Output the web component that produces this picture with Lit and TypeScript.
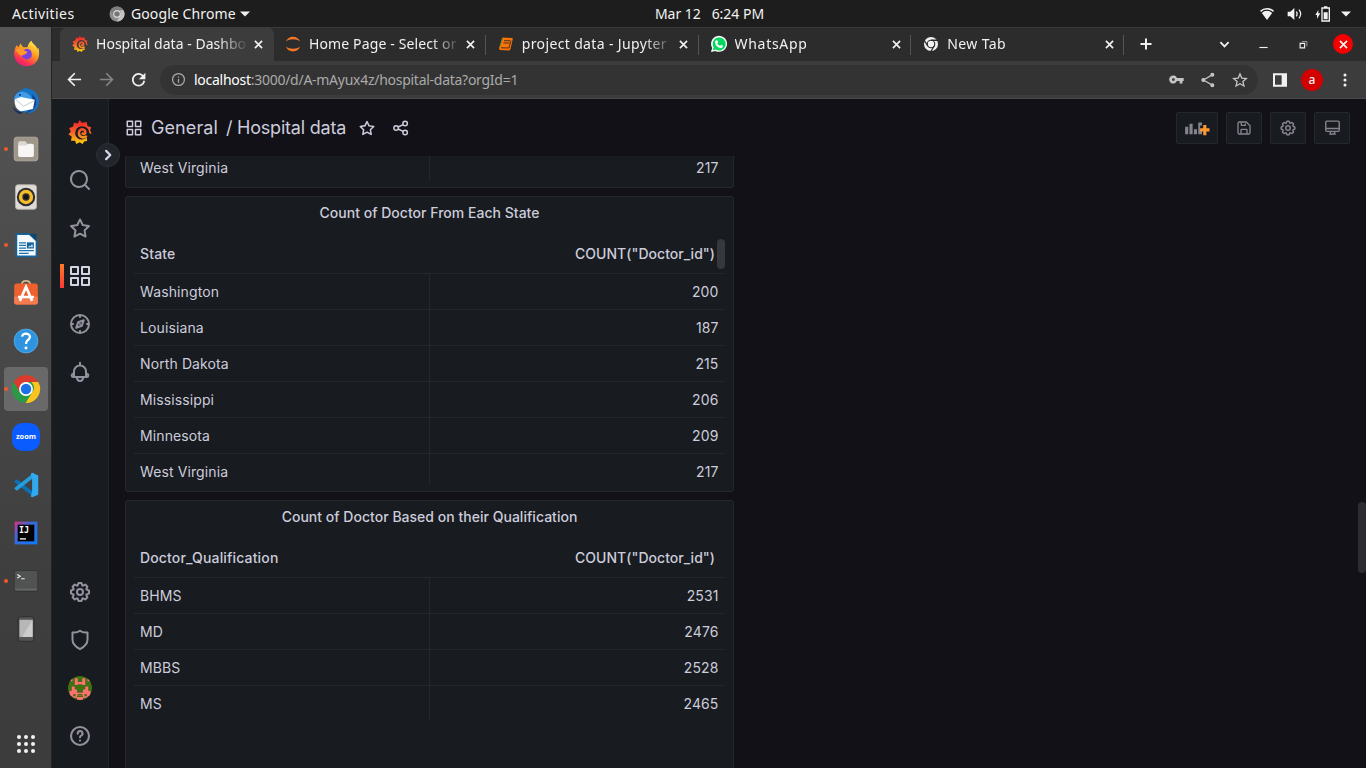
import { LitElement, html, css, svg, nothing } from "lit";
import { customElement, property } from "lit/decorators.js";
import { classMap } from "lit/directives/class-map.js";
import { styleMap } from "lit/directives/style-map.js";

const COG =
  "M21.32,9.55l-1.89-.63.89-1.78A1,1,0,0,0,20.13,6L18,3.87a1,1,0,0,0-1.15-.19l-1.78.89-.63-1.89A1,1,0,0,0,13.5,2h-3a1,1,0,0,0-.95.68L8.92,4.57,7.14,3.68A1,1,0,0,0,6,3.87L3.87,6a1,1,0,0,0-.19,1.15l.89,1.78-1.89.63A1,1,0,0,0,2,10.5v3a1,1,0,0,0,.68.95l1.89.63-.89,1.78A1,1,0,0,0,3.87,18L6,20.13a1,1,0,0,0,1.15.19l1.78-.89.63,1.89a1,1,0,0,0,.95.68h3a1,1,0,0,0,.95-.68l.63-1.89,1.78.89A1,1,0,0,0,18,20.13L20.13,18a1,1,0,0,0,.19-1.15l-.89-1.78,1.89-.63A1,1,0,0,0,22,13.5v-3A1,1,0,0,0,21.32,9.55ZM20,12.78l-1.2.4A2,2,0,0,0,17.64,16l.57,1.14-1.1,1.1L16,17.64a2,2,0,0,0-2.79,1.16l-.4,1.2H11.22l-.4-1.2A2,2,0,0,0,8,17.64l-1.14.57-1.1-1.1L6.36,16A2,2,0,0,0,5.2,13.18L4,12.78V11.22l1.2-.4A2,2,0,0,0,6.36,8L5.79,6.89l1.1-1.1L8,6.36A2,2,0,0,0,10.82,5.2l.4-1.2h1.56l.4,1.2A2,2,0,0,0,16,6.36l1.14-.57,1.1,1.1L17.64,8a2,2,0,0,0,1.16,2.79l1.2.4ZM12,8a4,4,0,1,0,4,4A4,4,0,0,0,12,8Zm0,6a2,2,0,1,1,2-2A2,2,0,0,1,12,14Z";
const STAR =
  "M22,9.67A1,1,0,0,0,21.14,9l-5.69-.83L12.9,3a1,1,0,0,0-1.8,0L8.55,8.16,2.86,9a1,1,0,0,0-.81.68,1,1,0,0,0,.25,1l4.13,4-1,5.68A1,1,0,0,0,6.9,21.44L12,18.77l5.1,2.67a.93.93,0,0,0,.46.12,1,1,0,0,0,.59-.19,1,1,0,0,0,.4-1l-1-5.68,4.13-4A1,1,0,0,0,22,9.67Zm-6.15,4a1,1,0,0,0-.29.88l.72,4.2-3.76-2a1.06,1.06,0,0,0-.94,0l-3.76,2,.72-4.2a1,1,0,0,0-.29-.88l-3-3,4.21-.61a1,1,0,0,0,.76-.55L12,5.7l1.88,3.82a1,1,0,0,0,.76.55l4.21.61Z";
const SEARCH =
  "M21.71,20.29,18,16.61A9,9,0,1,0,16.61,18l3.68,3.68a1,1,0,0,0,1.42,0A1,1,0,0,0,21.71,20.29ZM11,18a7,7,0,1,1,7-7A7,7,0,0,1,11,18Z";
const APPS =
  "M10,13H3a1,1,0,0,0-1,1v7a1,1,0,0,0,1,1h7a1,1,0,0,0,1-1V14A1,1,0,0,0,10,13ZM9,20H4V15H9ZM21,2H14a1,1,0,0,0-1,1v7a1,1,0,0,0,1,1h7a1,1,0,0,0,1-1V3A1,1,0,0,0,21,2ZM20,9H15V4h5Zm1,4H14a1,1,0,0,0-1,1v7a1,1,0,0,0,1,1h7a1,1,0,0,0,1-1V14A1,1,0,0,0,21,13Zm-1,7H15V15h5ZM10,2H3A1,1,0,0,0,2,3v7a1,1,0,0,0,1,1h7a1,1,0,0,0,1-1V3A1,1,0,0,0,10,2ZM9,9H4V4H9Z";

const fill = (d: string) => svg`<path fill="currentColor" d=${d} />`;
const line = (d: string, w = 2) =>
  svg`<path fill="none" stroke="currentColor" stroke-width=${w} stroke-linejoin="round" stroke-linecap="round" d=${d} />`;

/* Line glyphs, all on a 24 unit grid and coloured by the surrounding text. */
const glyphs: Record<string, unknown> = {
  cog: fill(COG),
  star: fill(STAR),
  search: fill(SEARCH),
  apps: fill(APPS),
  compass: line(
    "M12 3a9 9 0 1 0 0 18a9 9 0 1 0 0-18ZM12 3v2M12 19v2M3 12h2M19 12h2M15.8 8.2l-2 5.6l-5.6 2l2-5.6ZM12 11.9v.2"
  ),
  bell: line("M12 2.800V5.500M6 17v-5.500a6 6 0 0 1 12 0V17M5.500 17h13a1.500 1.500 0 0 0 .5-3l-1-1.500M5.500 17a1.500 1.500 0 0 1-.5-3l1-1.500M8.800 17.500c.6 4.500 5.800 4.500 6.400 0"),
  shield: line("M12 2.8C9.600 4.500 7 4.900 4.500 4.400V11.800C4.500 16 7.500 18.800 12 21.200C16.500 18.800 19.500 16 19.500 11.800V4.400C17 4.900 14.400 4.500 12 2.800Z"),
  question: line("M12 3a9 9 0 1 0 0 18a9 9 0 1 0 0-18ZM9.700 9.600A2.400 2.400 0 1 1 13.200 11.600C12.400 12 12 12.500 12 13.300M12 16.500v.1", 2.1),
  nodes: svg`<g fill="none" stroke="currentColor" stroke-width="2"><circle cx="5.500" cy="12" r="3"/><circle cx="17.500" cy="6" r="3"/><circle cx="17.500" cy="18" r="3"/><path d="M8.200 10.700L14.800 7.400M8.200 13.300L14.800 16.600"/></g>`,
  save: line("M3 5a2 2 0 0 1 2-2h10.500L21 8.500V19a2 2 0 0 1-2 2H5a2 2 0 0 1-2-2ZM8 3.500V8h6V6M7.500 21v-6a1 1 0 0 1 1-1h7a1 1 0 0 1 1 1v6"),
  monitor: line("M4 3h16a1.500 1.500 0 0 1 1.500 1.500v11.500a1.500 1.500 0 0 1-1.500 1.500H4a1.500 1.500 0 0 1-1.500-1.500V4.500A1.500 1.500 0 0 1 4 3ZM2.500 13.500h19M9 17.500V21h6v-3.500M8 21.300h8"),
  angle: line("M9.500 6.500L15 12l-5.500 5.500", 3),
  back: svg`<path fill="none" stroke="currentColor" stroke-width="2.600" d="M22.500 12H3M12.500 2L2.500 12l10 10"/>`,
  forward: svg`<path fill="none" stroke="currentColor" stroke-width="2.600" d="M1.500 12h19.500M11.500 2l10 10l-10 10"/>`,
  reload: svg`<path fill="none" stroke="currentColor" stroke-width="2.800" d="M20 7.500A9.300 9.300 0 1 0 21.300 14"/><path fill="currentColor" d="M23 1v10.500h-10.500Z"/>`,
  info: svg`<circle cx="12" cy="12" r="9.500" fill="none" stroke="currentColor" stroke-width="2"/><path fill="currentColor" d="M11 11h2v6h-2zM11 7h2v2h-2z"/>`,
  key: svg`<path fill="currentColor" fill-rule="evenodd" d="M12.700 9.500A6.500 6.500 0 1 0 12.700 14.500H17v4h4.500v-4H23.500v-5ZM7 14.200a2.200 2.200 0 1 1 0-4.400a2.200 2.200 0 0 1 0 4.400Z"/>`,
  share: svg`<g fill="currentColor" stroke="currentColor" stroke-width="1.800"><circle cx="5" cy="12" r="2.100"/><circle cx="18.500" cy="4.300" r="2.100"/><circle cx="18.500" cy="19.700" r="2.100"/><path fill="none" d="M18.500 4.300L5 12l13.500 7.700"/></g>`,
  bookmark: svg`<path fill="none" stroke="currentColor" stroke-width="2" d="M12 3l2.700 6.200l6.800.6l-5.100 4.500l1.500 6.700L12 17.500l-5.900 3.500l1.500-6.700L2.500 9.800l6.800-.6Z"/>`,
  panel: svg`<path fill="currentColor" fill-rule="evenodd" d="M1.500 2h21v20H1.500ZM4.500 5v14h10V5Z"/>`,
  dots: svg`<g fill="currentColor"><circle cx="12" cy="4.500" r="2.300"/><circle cx="12" cy="12" r="2.300"/><circle cx="12" cy="19.500" r="2.300"/></g>`,
  close: svg`<path stroke="currentColor" stroke-width="4.500" d="M2.500 2.500L21.500 21.500M21.500 2.500L2.500 21.500"/>`,
  plus: svg`<path stroke="currentColor" stroke-width="4" d="M12 1v22M1 12h22"/>`,
  chevron: svg`<path fill="none" stroke="currentColor" stroke-width="4" d="M3 7l9 9L21 7"/>`,
  minimize: svg`<path fill="currentColor" d="M1 18.500h22v3H1z"/>`,
  restore: svg`<path fill="none" stroke="currentColor" stroke-width="3" d="M3 9h12v12H3Z"/><path fill="none" stroke="currentColor" stroke-width="2" opacity=".7" d="M8 4h13v13"/>`,
  caret: svg`<path fill="currentColor" d="M0 6h24L12 18Z"/>`,
  wifi: svg`<path fill="currentColor" d="M1.500 7A15.500 15.500 0 0 1 22.500 7L21 9A13 13 0 0 0 3 9ZM4.200 10.400A11 11 0 0 1 19.800 10.400L12 21Z"/>`,
  sound: svg`<path fill="currentColor" d="M1 8.500h4L11 3v18l-6-5.500H1Z"/><path fill="none" stroke="currentColor" stroke-width="1.800" d="M14 8.500q2.500 3.500 0 7M18 5.500q5 6.500 0 13"/>`,
  battery: svg`<path fill="none" stroke="currentColor" stroke-width="2" d="M10.500 3h11v19.500h-11ZM13.500 1.500h5"/><path fill="currentColor" d="M13 9.500h6v10.500h-6zM5 6v5h3l-5 8v-5.500H0.500Z"/>`,
};

/* Full-colour pictures: application launchers and tab favicons. */
const grafana = (id: string) => svg`
  <defs><linearGradient id=${id} gradientUnits="userSpaceOnUse" x1="0" y1="0" x2="0" y2="32"><stop offset="0" stop-color="#f3202b"/><stop offset=".5" stop-color="#f4602a"/><stop offset="1" stop-color="#fdd40c"/></linearGradient></defs>
  <path fill="url(#${id})" d="M15.500 0L18.500 3.500L25 2.500L26 8L31 9.500L29.500 13.500L31.500 18.500L28.500 17.500A9.700 9.700 0 0 0 18.500 8.200A9.200 9.200 0 0 0 9.500 17.500A9 9 0 0 0 18.500 26Q22 26 25 23L25.500 28L21.500 28.500L19.500 32L15.500 29.500L11 32L9.500 27.500L4 27.500L5 22L.5 19L3.700 15.500L1.500 10.500L6.700 9L8 3.500L13 4.500Z"/>
  <path fill="none" stroke="url(#${id})" stroke-width="3.400" stroke-linecap="round" d="M24 22Q21 24 17.800 22.500A5.500 5.500 0 0 1 18.500 12.200Q23.200 12.500 23.200 16.500Q22.500 19.500 19.500 18"/>`;

const chrome = (a: string, b: string, c: string, core: string, ring: string) => svg`
  <circle cx="16" cy="16" r="15" fill=${b}/>
  <path fill=${a} d="M3 8.500A15 15 0 0 1 29 8.500H16L9.500 19.800Z"/>
  <path fill=${c} d="M29 8.500A15 15 0 0 1 15.500 31L22.500 19.800A7.500 7.500 0 0 0 21.500 8.500Z"/>
  <circle cx="16" cy="16" r="7.400" fill=${ring}/><circle cx="16" cy="16" r="5.600" fill=${core}/>`;

const pictures: Record<string, unknown> = {
  grafana: grafana("grafana-fill"),
  chrome: chrome("#db3a2e", "#2a9a46", "#fcc31e", "#1b72e8", "#fff"),
  chromeGray: chrome("#7d7d7d", "#8e8e8e", "#c4c4c4", "#777", "#f2f2f2"),
  chromeTab: svg`<circle cx="16" cy="16" r="14" fill="#f1f1f1"/><path fill="none" stroke="#2c2c2c" stroke-width="2.600" d="M16 8.500H30M22.500 20L15 32M9.500 20L2 8"/><circle cx="16" cy="16" r="7.500" fill="none" stroke="#2c2c2c" stroke-width="2.400"/><circle cx="16" cy="16" r="5.300" fill="#f1f1f1"/>`,
  jupyter: svg`<path fill="#f37726" d="M2 11C6-2 26-2 30 11C23 5 9 5 2 11ZM2 21C6 34 26 34 30 21C23 27 9 27 2 21Z"/>`,
  notebook: svg`<path fill="#ff7300" d="M10 3L28 4Q30 4 29.500 6L25 26Q24 29 21 29L4 28Q1 26 3 22L8 5Z"/><path fill="none" stroke="#2c2c2c" stroke-width="1.800" d="M12 9.500h12M11 14h12M6 23.500l16 .5L26 9"/><path stroke="#2f9b4a" stroke-width="1.500" d="M4 21L9 5"/>`,
  whatsapp: svg`<path fill="#fff" d="M0 32L2.300 23.800A16 16 0 1 1 8.500 29.800Z"/><path fill="#00d95f" d="M3.500 28.500L5.200 22.500A13 13 0 1 1 9.500 26.900Z"/><path fill="#fff" d="M10 8.500L12.500 8.400L14.300 12.400L12.600 14.800Q14.500 18.200 18.200 19.700L20.200 17.400L24 19.400Q24 24 19.500 24Q9.500 22.500 8 13Q8 10 10 8.500Z"/>`,
  firefox: svg`<defs><linearGradient id="ff" x1=".8" y1="0" x2=".25" y2="1"><stop offset="0" stop-color="#fff24a"/><stop offset=".45" stop-color="#ff9722"/><stop offset=".8" stop-color="#fc3055"/><stop offset="1" stop-color="#e11b82"/></linearGradient></defs>
    <path fill="url(#ff)" d="M5 7L7.500 9L9 5L12.500 9H17C18 5 20 3 21.500 2C22 5 27 7 28 11L29 9.500C32 19 28 30 16.500 30C6 30 0 21 3.500 10Z"/><path fill="#7643e0" d="M13 12.500Q17 9 21 13Q24 21 17 22.500Q11 22 10.500 17.500L14 17L17 14.800Z"/><path fill="#ff9a28" d="M4 12Q9 9 12 12.500L17 14L15 16.500Q12 16.500 11.500 18.500L8 17Z"/>`,
  thunderbird: svg`<path fill="#1673c4" d="M2 13Q5 4 12 3Q12 1 15 1Q30 3 31 16Q30 28 20 30L7 27Z"/><path fill="#3f9be8" d="M5 8Q11 2 19 8L25 15L9 14L2 13Z"/><path fill="#163b82" d="M23 8Q31 16 25 25L15 31Q26 23 23 8Z"/><path fill="#fff" d="M3 14L10 11.500L26 14.500L24 25L10 28Q2 24 3 14Z"/><path fill="none" stroke="#b7c1cd" d="M4 14l9 8l12-6"/><path fill="#172d60" d="M1 22Q6 30 13 28L10 31Q2 29 1 22Z"/><circle cx="9" cy="9" r="1" fill="#102344"/>`,
  files: svg`<rect x="2.500" y="2.500" width="27" height="27" rx="3" fill="#9e9789" stroke="#b3ac9f"/><path fill="#dcd9d3" d="M7 9q0-2 2-2h6l2 2v4H7Z"/><path fill="#f7f6f4" d="M7 12h9l2-2h5q2 0 2 2v11q0 2-2 2H9q-2 0-2-2Z"/>`,
  rhythmbox: svg`<rect x="4" y="2" width="24" height="28" rx="3" fill="#dfdcd7" stroke="#b8b4ad"/><circle cx="16" cy="16" r="10.500" fill="#2c2c30"/><circle cx="16" cy="16" r="6.200" fill="none" stroke="#f5bd28" stroke-width="4"/><circle cx="16" cy="16" r="2.500" fill="#151519"/>`,
  writer: svg`<path fill="#f8fbfd" stroke="#12649b" stroke-width="2" d="M5 3.500h15L28 11v18H5Z"/><path fill="#0d4770" d="M20 3h8v8Z"/><path stroke="#1a75ad" stroke-width="1.500" d="M8 13.500h8M8 16.500h8M8 19.500h8M8 22.500h17M8 25.500h11"/><path fill="#13629a" d="M17 13h8v7h-8z"/><path fill="#b9d3e5" d="M18 18.500l2-2l1 1l2-3l1.200 4Z"/>`,
  software: svg`<path fill="none" stroke="#d0b58d" stroke-width="2" d="M11 7Q11 2 16 2Q21 2 21 7"/><rect x="2.500" y="5" width="27" height="24" rx="3" fill="#ef602f"/><path fill="#f37b50" d="M2.500 20h27v7q0 2-2 2h-23q-2 0-2-2Z"/><path fill="none" stroke="#fff" stroke-width="3" d="M9 25L16 9L23 25M7 20.500h18"/>`,
  help: svg`<circle cx="16" cy="16" r="13.600" fill="#2f94df" stroke="#57aeea"/><path fill="none" stroke="#fff" stroke-width="2.500" d="M11.500 11Q12 7.500 16 7.500Q20.500 8 20.500 11.500Q20 14 17.500 15.500Q16 16.800 16 19.500"/><circle cx="16" cy="24" r="1.700" fill="#fff"/>`,
  zoom: svg`<rect x="0" y="0" width="32" height="32" rx="12" fill="#0b5cff"/>`,
  code: svg`<path fill="#0873b8" d="M3 11.500L5.500 9.500L25 24.500V30L3 12.800Z"/><path fill="#249ede" d="M3 20.500L5.500 22.500L25 7.500V2L3 19.200Z"/><path fill="#31a9ef" d="M23 2L30 5V27L23 30L21.500 29L23 23V9L21.500 3Z"/>`,
  idea: svg`<defs><linearGradient id="ij" x1="0" y1="0" x2="1" y2="1"><stop offset="0" stop-color="#e22f78"/><stop offset=".35" stop-color="#4267d4"/><stop offset="1" stop-color="#087cff"/></linearGradient></defs><path fill="url(#ij)" d="M3 3h26v26H3z"/><path fill="#000" d="M6.500 6.500h19v19h-19z"/><path fill="#fff" d="M9 22h7v1.500H9z"/>`,
  terminal: svg`<rect x="2.500" y="4" width="27" height="24" rx="2.500" fill="#505352" stroke="#333"/><path fill="none" stroke="#707271" d="M3.500 25.500h25"/><path fill="none" stroke="#eee" stroke-width="1.200" d="M6 8.500l3.500 2L6 12.500M10.500 13.500h4"/>`,
  phone: svg`<rect x="7" y="2" width="18" height="28" rx="2.500" fill="#555" stroke="#292929"/><path fill="#b7b7b7" d="M8.500 5.500h15v19.500h-15z"/><path fill="#ccc" d="M23.500 5.500v19.500h-12Z"/>`,
  grid: svg`<g fill="#f2f2f2">${[8, 16, 24].map((y) => [8, 16, 24].map((x) => svg`<circle cx=${x} cy=${y} r="2.300"/>`))}</g>`,
  avatar: svg`<clipPath id="av"><circle cx="16" cy="16" r="16"/></clipPath><g clip-path="url(#av)"><path fill="#3f7113" d="M0 0h32v32H0z"/><path fill="#ff7171" d="M9 3h4v5h6V3h4v9h-4v-1h-6v1H9zM5 14h4v4h3v4h8v-4h3v-4h4v6h3v7h-4v2h-6v-3h-8v3H6v-2H2v-7h3z"/><path fill="#3f7113" d="M13 19h6v3h-6zM13 24h6v1.500h-6zM7 24h3v3H7zM22 24h3v3h-3z"/><path fill="#ff7171" d="M12 28h8v4h-8zM3 3h3v4H3zM26 3h3v4h-3z"/></g>`,
  addPanel: svg`<g fill="#85838e"><path d="M-3 14h5v12h-5zM4 9h5v17H4zM11 18h5v8h-5zM18 7h6v5h-3v6h3v8h-6z"/></g><path fill="#ff9830" d="M26 11h5v5.500h5v5h-5v6h-5v-6h-5v-5h5Z"/>`,
};

@customElement("ui-glyph")
class UiGlyph extends LitElement {
  @property() name = "";
  @property({ type: Number }) size = 16;
  static styles = css`
    :host { display: inline-flex; flex: none; }
    svg { display: block; overflow: visible; }
  `;
  render() {
    return html`<svg width=${this.size} height=${this.size} viewBox="0 0 24 24" aria-hidden="true">${glyphs[this.name]}</svg>`;
  }
}

@customElement("ui-picture")
class UiPicture extends LitElement {
  @property() name = "";
  @property({ type: Number }) size = 16;
  static styles = css`
    :host { display: inline-flex; flex: none; }
    svg { display: block; overflow: visible; }
    text { font-family: "Open Sans", sans-serif; font-weight: 700; fill: #fff; }
    .mono { font-family: "DejaVu Sans Mono", monospace; }
  `;
  render() {
    const label =
      this.name === "zoom"
        ? svg`<text x="16" y="18.500" font-size="8" text-anchor="middle" textLength="23" lengthAdjust="spacingAndGlyphs">zoom</text>`
        : this.name === "idea"
          ? svg`<text class="mono" x="8" y="16" font-size="9.500">IJ</text>`
          : nothing;
    return html`<svg width=${this.size} height=${this.size} viewBox="0 0 32 32" aria-hidden="true">${pictures[this.name]}${label}</svg>`;
  }
}

@customElement("top-bar")
class TopBar extends LitElement {
  static styles = css`
    :host { display: grid; grid-template-columns: 1fr auto 1fr; align-items: center; height: 27px; background: #1d1d1d; color: #f2f2f2; font: 14px/27px "Noto Sans", sans-serif; white-space: pre; }
    .left { display: flex; align-items: center; padding-left: 12px; }
    .activities { width: 97px; letter-spacing: 0.42px; }
    .app { margin: 0 4px 0 6px; letter-spacing: 0.1px; }
    .clock { letter-spacing: -0.02px; padding-left: 53px; }
    .right { display: flex; justify-content: flex-end; align-items: center; gap: 12px; padding-right: 15px; }
    .down { margin-left: -2px; }
  `;
  render() {
    return html`
      <div class="left">
        <span class="activities">Activities</span>
        <ui-picture name="chromeGray" size="16"></ui-picture>
        <span class="app">Google Chrome</span>
        <ui-glyph name="caret" size="10"></ui-glyph>
      </div>
      <div class="clock">Mar 12   6:24 PM</div>
      <div class="right">
        <ui-glyph name="wifi" size="16"></ui-glyph>
        <ui-glyph name="sound" size="16"></ui-glyph>
        <ui-glyph name="battery" size="16"></ui-glyph>
        <ui-glyph class="down" name="caret" size="10"></ui-glyph>
      </div>
    `;
  }
}

const launchers = [
  { name: "firefox", size: 29 },
  { name: "thunderbird", size: 28 },
  { name: "files", size: 28, running: true },
  { name: "rhythmbox", size: 28 },
  { name: "writer", size: 28, running: true },
  { name: "software", size: 28 },
  { name: "help", size: 28 },
  { name: "chrome", size: 30, running: true, focused: true },
  { name: "zoom", size: 28 },
  { name: "code", size: 28 },
  { name: "idea", size: 28 },
  { name: "terminal", size: 28, running: true },
  { name: "phone", size: 28 },
];

@customElement("app-dock")
class AppDock extends LitElement {
  static styles = css`
    :host { display: flex; flex-direction: column; box-sizing: border-box; padding-top: 2px; width: 52px; background: linear-gradient(#565656, #3e3e3e 75%, #3c3c3c); border-right: 1px solid #242424; }
    .slot { display: grid; grid-template-columns: 4px 44px; align-items: center; height: 48px; flex: none; }
    .dot { width: 4px; height: 4px; border-radius: 50%; margin-left: 4px; z-index: 1; }
    .running .dot { background: #f05a28; }
    .tile { display: flex; align-items: center; justify-content: center; width: 44px; height: 44px; border-radius: 4px; }
    .focused .tile { background: #696969; }
    .apps { margin-top: auto; }
  `;
  render() {
    return html`
      ${launchers.map(
        (l) => html`<div class=${classMap({ slot: true, running: !!l.running, focused: !!l.focused })}>
          <span class="dot"></span><span class="tile"><ui-picture name=${l.name} size=${l.size}></ui-picture></span>
        </div>`
      )}
      <div class="slot apps"><span class="dot"></span><span class="tile"><ui-picture name="grid" size="28"></ui-picture></span></div>
    `;
  }
}

const tabs = [
  { icon: "grafana", title: "Hospital data - Dashbo", spacing: 0.02 },
  { icon: "jupyter", title: "Home Page - Select or", spacing: 0.13 },
  { icon: "notebook", title: "project data - Jupyter", spacing: 0.36 },
  { icon: "whatsapp", title: "WhatsApp", spacing: 0.7 },
  { icon: "chromeTab", title: "New Tab", spacing: 0.4 },
];

@customElement("browser-chrome")
class BrowserChrome extends LitElement {
  static styles = css`
    :host { display: block; min-width: 0; color: #f1f1f1; font: 14px/20px "Noto Sans", sans-serif; white-space: nowrap; }
    .strip { display: flex; height: 34px; background: #2c2c2c; padding-left: 8px; box-shadow: inset 0 1px #3a3a3a; }
    .tab { display: flex; flex: none; align-items: center; box-sizing: border-box; width: 212.75px; height: 34px; padding: 0 10.500px 0 12px; }
    .tab + .tab { background: linear-gradient(#555, #555) right 0 top 8px / 1px 20px no-repeat; }
    .active { background: #3c3c3c; width: 214px; margin-right: -1px; padding-right: 11.500px; border-radius: 8px 8px 0 0; }
    .title { flex: 1; min-width: 0; margin: 0 8px; mask-image: linear-gradient(90deg, #000 122px, transparent 153px); }
    .controls { display: flex; align-items: center; flex: 1; padding: 0 13px 0 16px; }
    .plus { margin-right: 66.500px; }
    .chev { margin-right: 29px; }
    .mini { margin-right: 31px; }
    .quit { display: flex; align-items: center; justify-content: center; width: 20px; height: 20px; margin-left: auto; border-radius: 50%; background: #f40000; }
    .toolbar { display: flex; align-items: center; box-sizing: border-box; height: 38px; background: #3c3c3c; padding: 0 13.500px 0 14.500px; border-bottom: 1px solid #4a4a4a; }
    .nav { display: flex; gap: 17px; width: 93.500px; align-items: center; }
    .dim { color: #858585; }
    .address { display: flex; align-items: center; box-sizing: border-box; flex: 1; height: 30px; border-radius: 15px; background: #333; padding: 0 10px 0 11px; color: #aaa; }
    .url { flex: 1; margin-left: 8px; letter-spacing: -0.27px; }
    .host { color: #fff; }
    .actions { display: flex; gap: 16px; color: #c4c4c4; }
    .tools { display: flex; align-items: center; padding-left: 14px; }
    .user { display: flex; align-items: center; justify-content: center; width: 22px; height: 22px; border-radius: 50%; background: #d30000; font-size: 12px; font-weight: 500; margin: 0 13.500px 0 13px; }
  `;
  render() {
    return html`
      <div class="strip">
        ${tabs.map(
          (t, i) => html`<div class=${classMap({ tab: true, active: i === 0 })}>
            <ui-picture name=${t.icon} size="16"></ui-picture>
            <span class="title" style=${styleMap({ letterSpacing: `${t.spacing}px` })}>${t.title}</span>
            <ui-glyph name="close" size="9"></ui-glyph>
          </div>`
        )}
        <div class="controls">
          <ui-glyph class="plus" name="plus" size="12"></ui-glyph>
          <ui-glyph class="chev" name="chevron" size="11"></ui-glyph>
          <ui-glyph class="mini" name="minimize" size="9"></ui-glyph>
          <ui-glyph name="restore" size="9"></ui-glyph>
          <span class="quit"><ui-glyph name="close" size="9"></ui-glyph></span>
        </div>
      </div>
      <div class="toolbar">
        <div class="nav">
          <ui-glyph name="back" size="15"></ui-glyph>
          <ui-glyph class="dim" name="forward" size="15"></ui-glyph>
          <ui-glyph name="reload" size="15"></ui-glyph>
        </div>
        <div class="address">
          <ui-glyph name="info" size="15"></ui-glyph>
          <span class="url"><span class="host">localhost</span>:3000/d/A-mAyux4z/hospital-data?orgId=1</span>
          <span class="actions">
            <ui-glyph name="key" size="15"></ui-glyph>
            <ui-glyph name="share" size="16"></ui-glyph>
            <ui-glyph name="bookmark" size="16"></ui-glyph>
          </span>
        </div>
        <div class="tools">
          <ui-glyph name="panel" size="16"></ui-glyph>
          <span class="user">a</span>
          <ui-glyph name="dots" size="16"></ui-glyph>
        </div>
      </div>
    `;
  }
}

@customElement("side-menu")
class SideMenu extends LitElement {
  static styles = css`
    :host { display: flex; flex-direction: column; position: relative; z-index: 1; box-sizing: border-box; width: 57px; padding: 9px 0 8px; background: #181b1f; border-right: 1px solid #23252a; color: #93919e; }
    .item { display: flex; align-items: center; justify-content: center; width: 56px; height: 48px; }
    .active { color: #d5d4e4; background: linear-gradient(#ff7a2a, #f83b35) 8px 12px / 4px 24px no-repeat; }
    .bottom { margin-top: auto; }
    .toggle { position: absolute; left: 44px; top: 44px; z-index: 2; display: flex; align-items: center; justify-content: center; box-sizing: border-box; width: 24px; height: 24px; border-radius: 50%; background: #22252b; border: 1px solid #2d3036; color: #d5d4e4; }
  `;
  render() {
    return html`
      <span class="item"><ui-picture name="grafana" size="24"></ui-picture></span>
      <span class="item"><ui-glyph name="search" size="24"></ui-glyph></span>
      <span class="item"><ui-glyph name="star" size="24"></ui-glyph></span>
      <span class="item active"><ui-glyph name="apps" size="24"></ui-glyph></span>
      <span class="item"><ui-glyph name="compass" size="24"></ui-glyph></span>
      <span class="item"><ui-glyph name="bell" size="24"></ui-glyph></span>
      <span class="item bottom"><ui-glyph name="cog" size="24"></ui-glyph></span>
      <span class="item"><ui-glyph name="shield" size="24"></ui-glyph></span>
      <span class="item"><ui-picture name="avatar" size="24"></ui-picture></span>
      <span class="item"><ui-glyph name="question" size="24"></ui-glyph></span>
      <span class="toggle"><ui-glyph name="angle" size="18"></ui-glyph></span>
    `;
  }
}

type Row = [string, number];

@customElement("table-panel")
class TablePanel extends LitElement {
  @property() heading = "";
  @property({ attribute: false }) columns: string[] = [];
  @property({ attribute: false }) rows: Row[] = [];
  @property({ type: Boolean }) scrollable = false;
  @property({ type: Boolean, reflect: true }) tail = false;
  static styles = css`
    :host { display: flex; flex-direction: column; flex: none; box-sizing: border-box; width: 609px; height: 296px; padding: 0 8px 7px; background: #181b1f; border: 1px solid #25272c; border-radius: 3px; color: #ccccdc; font: 14px/22px Inter, sans-serif; letter-spacing: 0.11px; }
    :host([tail]) { height: 32px; border-top: 0; border-radius: 0 0 3px 3px; }
    .heading { height: 41px; line-height: 32px; text-align: center; font-weight: 500; font-size: 14px; letter-spacing: 0.02px; }
    .table { display: flex; flex-direction: column; position: relative; flex: 1; min-height: 0; overflow: hidden; }
    .row { display: grid; grid-template-columns: 1fr 1fr; flex: none; box-sizing: border-box; height: 36px; border-bottom: 1px solid #25272c; line-height: 36px; }
    .row.last { border-bottom: 0; height: 34px; grid-template-rows: 34px; }
    .head { font-weight: 500; line-height: 32px; letter-spacing: 0.15px; }
    .cell { padding: 0 6px; }
    .cell:last-child { text-align: right; padding-right: 6.500px; }
    .body .cell:first-child { border-right: 1px solid #25272c; }
    .head .cell:last-child { padding-right: 10px; letter-spacing: 0.03px; }
    :host([tail]) .body { margin-top: -6px; }
    .thumb { position: absolute; right: 0; top: 1px; width: 8px; height: 30px; border-radius: 4px; background: #36383e; }
  `;
  render() {
    return html`
      ${this.heading ? html`<div class="heading">${this.heading}</div>` : nothing}
      <div class="table">
        ${this.columns.length
          ? html`<div class="row head">${this.columns.map((c) => html`<span class="cell">${c}</span>`)}</div>`
          : nothing}
        ${this.rows.map(
          ([label, count], i) => html`<div class=${classMap({ row: true, body: true, last: !this.tail && i === this.rows.length - 1 })}>
            <span class="cell">${label}</span><span class="cell">${count}</span>
          </div>`
        )}
        ${this.scrollable ? html`<span class="thumb"></span>` : nothing}
      </div>
    `;
  }
}

const byState: Row[] = [
  ["Washington", 200],
  ["Louisiana", 187],
  ["North Dakota", 215],
  ["Mississippi", 206],
  ["Minnesota", 209],
  ["West Virginia", 217],
];
const byQualification: Row[] = [
  ["BHMS", 2531],
  ["MD", 2476],
  ["MBBS", 2528],
  ["MS", 2465],
];

@customElement("dashboard-page")
class DashboardPage extends LitElement {
  static styles = css`
    :host { display: flex; flex-direction: column; position: relative; min-width: 0; min-height: 0; overflow: hidden; background: #121117; color: #ccccdc; font: 14px/22px Inter, sans-serif; }
    .bar { display: flex; align-items: center; flex: none; box-sizing: border-box; height: 57px; padding: 0 16px; }
    .crumbs { display: flex; align-items: center; flex: 1; font-size: 18px; letter-spacing: 0.1px; white-space: pre; }
    .folder { margin: 0 8px 0 8px; }
    .name { margin-right: 12px; letter-spacing: -0.22px; }
    .nodes { margin-left: 16px; }
    .buttons { display: flex; gap: 8px; color: #85838e; }
    .button { display: flex; align-items: center; justify-content: center; box-sizing: border-box; width: 36px; height: 32px; background: #181b1f; border: 1px solid #25272c; border-radius: 2px; }
    .wide { width: 42px; }
    .panels { display: flex; flex-direction: column; flex: 1; min-height: 0; gap: 8px; padding-left: 16px; overflow: hidden; }
    .thumb { position: absolute; right: 0; top: 403px; width: 8px; height: 71px; border-radius: 4px; background: #2b2d33; }
  `;
  render() {
    return html`
      <div class="bar">
        <div class="crumbs">
          <ui-glyph name="apps" size="18"></ui-glyph>
          <span class="folder">General</span>
          <span class="name">/ Hospital data</span>
          <ui-glyph name="star" size="18"></ui-glyph>
          <ui-glyph class="nodes" name="nodes" size="18"></ui-glyph>
        </div>
        <div class="buttons">
          <span class="button wide"><ui-picture name="addPanel" size="20"></ui-picture></span>
          <span class="button"><ui-glyph name="save" size="16"></ui-glyph></span>
          <span class="button"><ui-glyph name="cog" size="18"></ui-glyph></span>
          <span class="button"><ui-glyph name="monitor" size="17"></ui-glyph></span>
        </div>
      </div>
      <div class="panels">
        <table-panel tail .rows=${[["West Virginia", 217]] as Row[]}></table-panel>
        <table-panel heading="Count of Doctor From Each State" .columns=${["State", 'COUNT("Doctor_id")']} .rows=${byState} scrollable></table-panel>
        <table-panel heading="Count of Doctor Based on their Qualification" .columns=${["Doctor_Qualification", 'COUNT("Doctor_id")']} .rows=${byQualification}></table-panel>
      </div>
      <span class="thumb"></span>
    `;
  }
}

@customElement("app-root")
class AppRoot extends LitElement {
  static styles = css`
    :host { display: grid; grid-template-rows: 27px minmax(0, 1fr); width: 1366px; height: 768px; overflow: hidden; background: #121117; }
    .desktop { display: grid; grid-template-columns: 52px minmax(0, 1fr); min-height: 0; }
    .window { display: grid; grid-template-columns: minmax(0, 1fr); grid-template-rows: 72px minmax(0, 1fr); min-width: 0; min-height: 0; }
    .page { display: grid; grid-template-columns: 57px minmax(0, 1fr); min-height: 0; }
  `;
  render() {
    return html`
      <top-bar></top-bar>
      <div class="desktop">
        <app-dock></app-dock>
        <div class="window">
          <browser-chrome></browser-chrome>
          <div class="page">
            <side-menu></side-menu>
            <dashboard-page></dashboard-page>
          </div>
        </div>
      </div>
    `;
  }
}
